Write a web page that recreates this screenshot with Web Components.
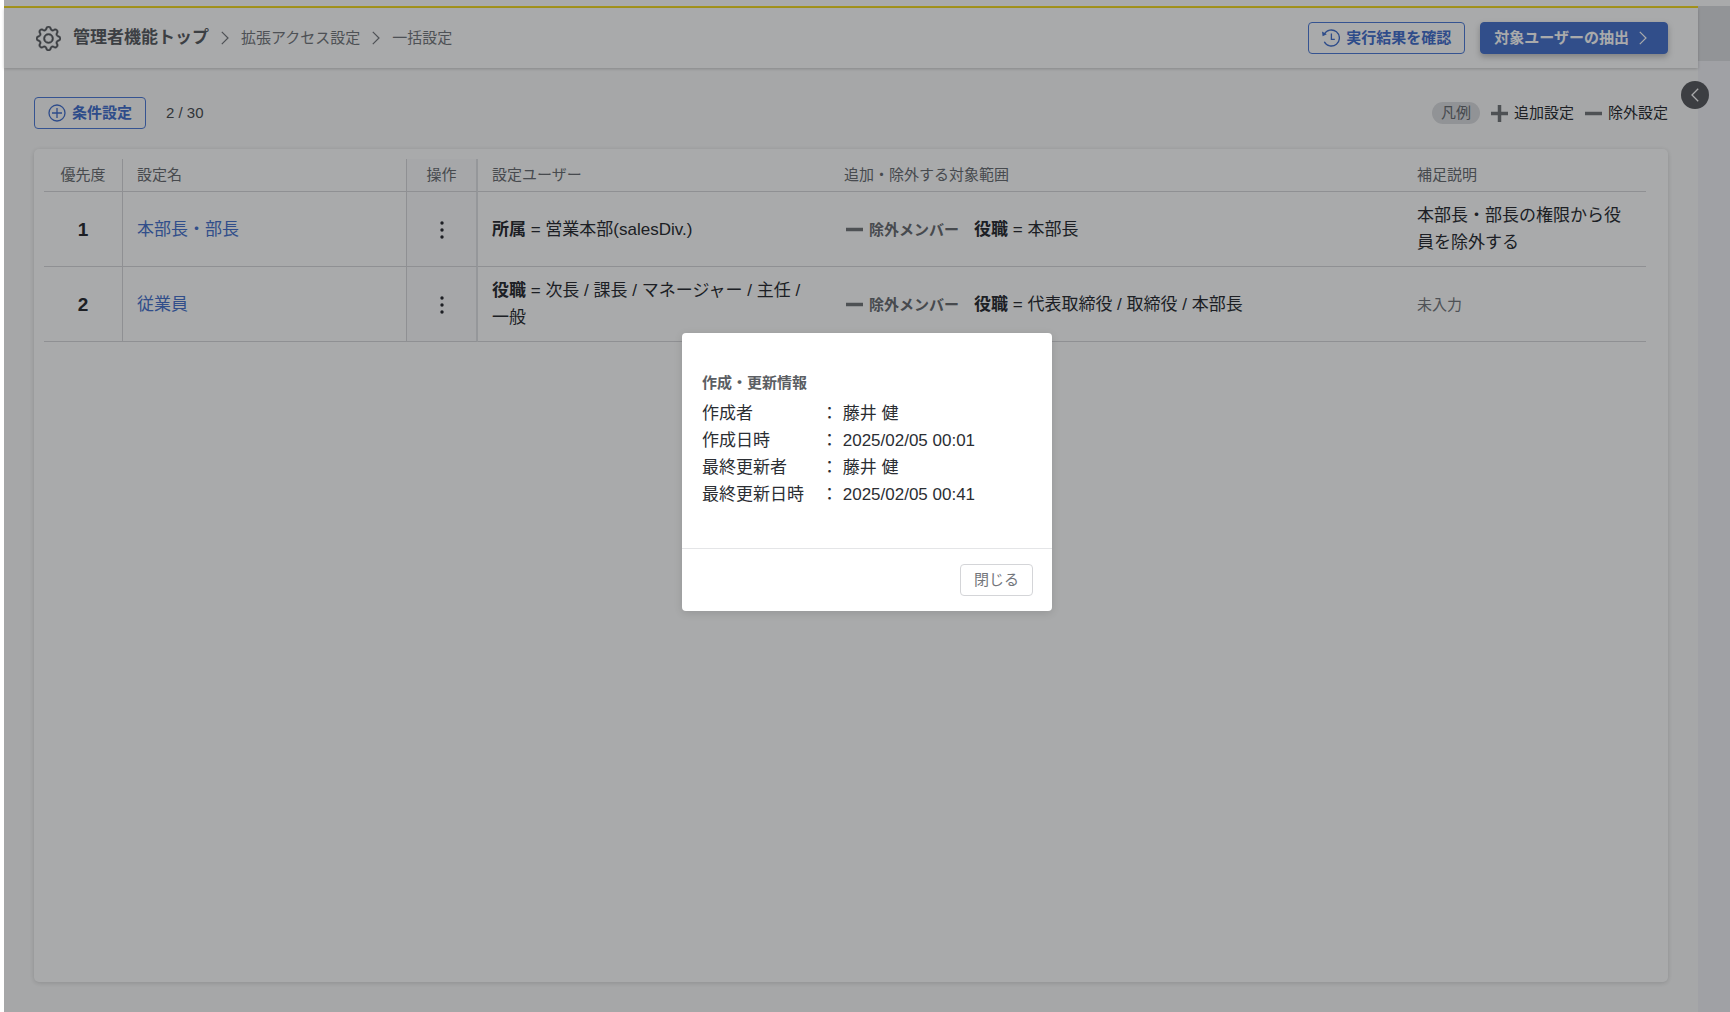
<!DOCTYPE html>
<html lang="ja">
<head>
<meta charset="utf-8">
<title>一括設定</title>
<style>
  html, body { margin: 0; }
  body {
    font-family: "Liberation Sans", "Noto Sans CJK JP", sans-serif;
    font-size: 17px; line-height: 27px; color: #24272c; background: #fff;
  }
</style>
</head>
<body>
<admin-page>
  <page-header slot="header"></page-header>
  <list-toolbar></list-toolbar>
  <settings-table></settings-table>
  <info-dialog slot="dialog"></info-dialog>
</admin-page>

<script>
const define = (name, html) => {
  const template = document.createElement('template');
  template.innerHTML = html;
  customElements.define(name, class extends HTMLElement {
    constructor() {
      super();
      this.attachShadow({ mode: 'open' }).append(template.content.cloneNode(true));
    }
  });
};

const ICONS = {
  gear: ['0 0 16 16', '<g fill="currentColor" stroke="currentColor" stroke-width=".3"><path d="M8 4.754a3.246 3.246 0 1 0 0 6.492 3.246 3.246 0 0 0 0-6.492zM5.754 8a2.246 2.246 0 1 1 4.492 0 2.246 2.246 0 0 1-4.492 0z"/><path d="M9.796 1.343c-.527-1.79-3.065-1.79-3.592 0l-.094.319a.873.873 0 0 1-1.255.52l-.292-.16c-1.64-.892-3.433.902-2.54 2.541l.159.292a.873.873 0 0 1-.52 1.255l-.319.094c-1.79.527-1.79 3.065 0 3.592l.319.094a.873.873 0 0 1 .52 1.255l-.16.292c-.892 1.64.901 3.434 2.541 2.54l.292-.159a.873.873 0 0 1 1.255.52l.094.319c.527 1.79 3.065 1.79 3.592 0l.094-.319a.873.873 0 0 1 1.255-.52l.292.16c1.64.893 3.434-.902 2.54-2.541l-.159-.292a.873.873 0 0 1 .52-1.255l.319-.094c1.79-.527 1.79-3.065 0-3.592l-.319-.094a.873.873 0 0 1-.52-1.255l.16-.292c.893-1.64-.902-3.433-2.541-2.54l-.292.159a.873.873 0 0 1-1.255-.52l-.094-.319zm-2.633.283c.246-.835 1.428-.835 1.674 0l.094.319a1.873 1.873 0 0 0 2.693 1.115l.291-.16c.764-.415 1.6.42 1.184 1.185l-.159.292a1.873 1.873 0 0 0 1.116 2.692l.318.094c.835.246.835 1.428 0 1.674l-.319.094a1.873 1.873 0 0 0-1.115 2.693l.16.291c.415.764-.42 1.6-1.185 1.184l-.291-.159a1.873 1.873 0 0 0-2.693 1.116l-.094.318c-.246.835-1.428.835-1.674 0l-.094-.319a1.873 1.873 0 0 0-2.692-1.115l-.292.16c-.764.415-1.6-.42-1.184-1.185l.159-.291A1.873 1.873 0 0 0 1.945 8.93l-.319-.094c-.835-.246-.835-1.428 0-1.674l.319-.094A1.873 1.873 0 0 0 3.06 4.377l-.16-.292c-.415-.764.42-1.6 1.185-1.184l.292.159a1.873 1.873 0 0 0 2.692-1.115l.094-.319z"/></g>'],
  plusCircle: ['0 0 18 18', '<g fill="none" stroke="currentColor" stroke-width="1.3"><circle cx="9" cy="9" r="8"/><path d="M9 4v10M4 9h10"/></g>'],
  history: ['0 0 18 18', '<g fill="none" stroke="currentColor" stroke-width="1.3"><path d="M2.300 5.300A8 8 0 1 1 2.300 12.700"/><path d="M9.400 4.500v5.800h3.400"/></g><path fill="currentColor" d="M0 2.600l.6 4.600 4.200-1.900z"/>'],
  right: ['0 0 8 14', '<path d="M.8.8 7 7 .8 13.2" fill="none" stroke="currentColor" stroke-width="1.2"/>'],
  left: ['0 0 8 14', '<path d="M7.2.8 1 7l6.200 6.200" fill="none" stroke="currentColor" stroke-width="1.3"/>'],
  plus: ['0 0 17 17', '<path d="M8.500 0v17M0 8.500h17" stroke="currentColor" stroke-width="3.500"/>'],
  minus: ['0 0 17 17', '<path d="M0 8.500h17" stroke="currentColor" stroke-width="3.500"/>'],
  dots: ['0 0 18 18', '<g fill="currentColor"><circle cx="9" cy="2" r="1.700"/><circle cx="9" cy="9" r="1.700"/><circle cx="9" cy="16" r="1.700"/></g>']
};
customElements.define('ui-icon', class extends HTMLElement {
  constructor() {
    super();
    this.attachShadow({ mode: 'open' });
  }
  connectedCallback() {
    const [box, shape] = ICONS[this.getAttribute('name')];
    this.shadowRoot.innerHTML = `<style>
      :host { display: inline-flex; flex: none; width: 17px; height: 17px; }
      svg { width: 100%; height: 100%; }
    </style><svg viewBox="${box}" aria-hidden="true">${shape}</svg>`;
  }
});

define('ui-button', `<style>
  :host { display: inline-flex; }
  button {
    display: flex; align-items: center; gap: 6px; height: 32px; box-sizing: border-box;
    padding: 0 13px; border: 1px solid #4a78d6; border-radius: 4px;
    background: transparent; color: #3f6ccc; font: bold 15px/20px "Liberation Sans", "Noto Sans CJK JP", sans-serif;
    white-space: nowrap;
  }
  :host([kind="primary"]) button {
    gap: 10px; padding: 0 20px 0 13px; background: #4470cc; border-color: #4470cc; color: #fff;
    box-shadow: 0 3px 6px rgba(0, 0, 0, .25);
  }
  :host([kind="plain"]) button { background: #fff; border-color: #d4d5d8; color: #73767b; font-weight: normal; }
</style><button type="button"><slot></slot></button>`);

define('admin-page', `<style>
  :host { display: flex; min-height: 100vh; box-sizing: border-box; padding: 6px 0 0 4px; position: relative; }
  .page { flex: 1; min-width: 0; display: flex; flex-direction: column; border-top: 2px solid #f8dc20; background: #fbfbfb; position: relative; }
  main { flex: 1; display: flex; flex-direction: column; padding: 29px 30px 30px; }
  aside { width: 32px; background: #f1f1f6; }
  .tab { height: 55px; background: #dcdde0; }
  .fold {
    position: absolute; right: -11px; top: 73px; width: 28px; height: 28px; padding: 0; border: 0; border-radius: 50%;
    display: flex; align-items: center; justify-content: center; background: #55575b; color: #fff; z-index: 1;
  }
  .fold ui-icon { width: 8px; height: 14px; }
  .overlay {
    position: absolute; inset: 0 0 0 4px; z-index: 2; box-sizing: border-box; padding-bottom: 68px;
    display: flex; align-items: center; justify-content: center; background: rgba(17, 20, 23, .36);
  }
</style>
<div class="page">
  <slot name="header"></slot>
  <main><slot></slot></main>
  <button class="fold" type="button" aria-label="開く"><ui-icon name="left"></ui-icon></button>
</div>
<aside><div class="tab"></div></aside>
<div class="overlay"><slot name="dialog"></slot></div>`);

define('page-header', `<style>
  :host {
    display: flex; align-items: center; justify-content: space-between; height: 60px; box-sizing: border-box;
    padding: 0 30px 0 32px; background: #fff; box-shadow: 0 1px 3px rgba(0, 0, 0, .2);
  }
  nav, .actions { display: flex; align-items: center; }
  nav { gap: 12px; font-size: 15px; line-height: 26px; }
  .actions { gap: 15px; }
  a { color: #717479; text-decoration: none; }
  .top { display: flex; align-items: center; gap: 12px; font-size: 17px; font-weight: bold; color: #55585d; }
  .sep { width: 8px; height: 14px; color: #717479; }
  .gear { width: 25px; height: 25px; }
  .clock { width: 18px; height: 18px; }
  .next { width: 8px; height: 14px; }
</style>
<nav aria-label="パンくず">
  <a class="top" href="#top"><ui-icon class="gear" name="gear"></ui-icon>管理者機能トップ</a>
  <ui-icon class="sep" name="right"></ui-icon>
  <a href="#access">拡張アクセス設定</a>
  <ui-icon class="sep" name="right"></ui-icon>
  <a href="#bulk">一括設定</a>
</nav>
<div class="actions">
  <ui-button><ui-icon class="clock" name="history"></ui-icon>実行結果を確認</ui-button>
  <ui-button kind="primary">対象ユーザーの抽出<ui-icon class="next" name="right"></ui-icon></ui-button>
</div>`);

define('list-toolbar', `<style>
  :host { display: flex; align-items: center; justify-content: space-between; height: 32px; font-size: 15px; line-height: 26px; }
  div, .item { display: flex; align-items: center; }
  .left { gap: 20px; color: #45484d; }
  .add { width: 18px; height: 18px; }
  .legend { gap: 11px; }
  .badge { padding: 0 9px; border-radius: 12px; line-height: 22px; background: #dadbde; color: #66696e; }
  .item { gap: 6px; }
  .item ui-icon { color: #717478; }
</style>
<div class="left">
  <ui-button><ui-icon class="add" name="plusCircle"></ui-icon>条件設定</ui-button>
  <span>2 / 30</span>
</div>
<div class="legend">
  <span class="badge">凡例</span>
  <span class="item"><ui-icon name="plus"></ui-icon>追加設定</span>
  <span class="item"><ui-icon name="minus"></ui-icon>除外設定</span>
</div>`);

define('settings-table', `<style>
  :host {
    display: block; flex: 1; margin-top: 20px; padding: 10px 22px 0 10px; background: #fff; border-radius: 5px;
    box-shadow: 0 1px 5px rgba(0, 0, 0, .16);
  }
  table { width: 100%; table-layout: fixed; border-collapse: separate; border-spacing: 0; }
  th, td { box-sizing: border-box; text-align: left; border-bottom: 1px solid #d6d7da; }
  th { height: 33px; padding: 0 15px 0 14px; font-size: 15px; line-height: 22px; font-weight: normal; color: #66696e; }
  td { height: 75px; padding: 10px 15px 10px 14px; }
  .c { text-align: center; padding-left: 0; padding-right: 0; }
  .line { border-right: 1px solid #d6d7da; }
  .ops { background: #fbfbfc; border-right: 2px solid #e0e1e4; }
  .num { font-size: 19px; font-weight: bold; }
  a { color: #4470cc; text-decoration: none; }
  .menu { display: inline-flex; padding: 0; border: 0; background: none; color: inherit; vertical-align: middle; }
  .menu ui-icon { width: 18px; height: 18px; }
  .rule { display: flex; align-items: center; gap: 15px; }
  .kind { display: flex; align-items: center; gap: 6px; font-size: 15px; font-weight: bold; color: #66696e; }
  .kind ui-icon { padding-left: 2px; color: #717478; }
  .empty { font-size: 15px; color: #717479; }
</style>
<table>
  <colgroup><col style="width:79px"><col style="width:284px"><col style="width:71px"><col style="width:352px"><col><col style="width:243px"></colgroup>
  <thead><tr>
    <th class="c line">優先度</th><th class="line">設定名</th><th class="c ops">操作</th>
    <th>設定ユーザー</th><th>追加・除外する対象範囲</th><th>補足説明</th>
  </tr></thead>
  <tbody>
    <tr>
      <td class="c line num">1</td><td class="line"><a href="#1">本部長・部長</a></td>
      <td class="c ops"><button class="menu" type="button" aria-label="操作"><ui-icon name="dots"></ui-icon></button></td>
      <td><b>所属</b> = 営業本部(salesDiv.)</td>
      <td><div class="rule"><span class="kind"><ui-icon name="minus"></ui-icon>除外メンバー</span><span><b>役職</b> = 本部長</span></div></td>
      <td>本部長・部長の権限から役員を除外する</td>
    </tr>
    <tr>
      <td class="c line num">2</td><td class="line"><a href="#2">従業員</a></td>
      <td class="c ops"><button class="menu" type="button" aria-label="操作"><ui-icon name="dots"></ui-icon></button></td>
      <td><b>役職</b> = <span>次長 / </span><span>課長 / </span><span>マネージャー / </span><span>主任 / </span><span>一般</span></td>
      <td><div class="rule"><span class="kind"><ui-icon name="minus"></ui-icon>除外メンバー</span><span><b>役職</b> = 代表取締役 / 取締役 / 本部長</span></div></td>
      <td class="empty">未入力</td>
    </tr>
  </tbody>
</table>`);

define('info-dialog', `<style>
  :host { display: block; width: 370px; background: #fff; border-radius: 4px; box-shadow: 0 2px 8px rgba(0, 0, 0, .12); }
  .body { padding: 36px 20px 40px; }
  h2 { margin: 0; font-size: 15px; line-height: 27px; color: #5b5e63; }
  dl { margin: 4px 0 0; display: grid; grid-template-columns: 119px 1fr; color: #2b2e33; }
  dd { margin: 0; }
  footer { display: flex; justify-content: flex-end; padding: 15px 19px; border-top: 1px solid #e4e5e7; }
</style>
<section role="dialog" aria-labelledby="title">
  <div class="body">
    <h2 id="title">作成・更新情報</h2>
    <dl>
      <dt>作成者</dt><dd>： 藤井 健</dd>
      <dt>作成日時</dt><dd>： 2025/02/05 00:01</dd>
      <dt>最終更新者</dt><dd>： 藤井 健</dd>
      <dt>最終更新日時</dt><dd>： 2025/02/05 00:41</dd>
    </dl>
  </div>
  <footer><ui-button kind="plain">閉じる</ui-button></footer>
</section>`);
</script>
</body>
</html>
